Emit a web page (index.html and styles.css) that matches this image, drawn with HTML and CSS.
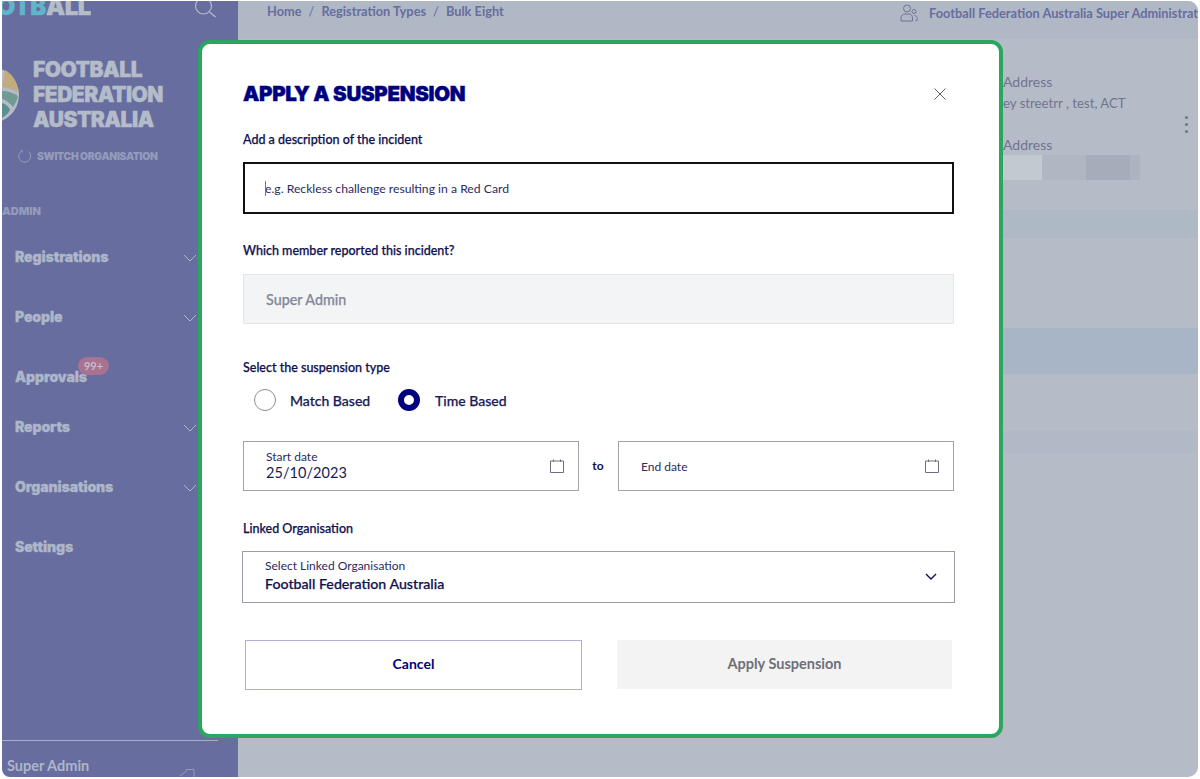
FILE: index.html
```html
<!DOCTYPE html>
<html lang="en">
<head>
<meta charset="utf-8">
<title>Apply a suspension</title>
<link rel="stylesheet" href="styles.css">
</head>
<body>
<div class="frame">
  <aside class="sidebar">
    <div class="brand-row">
      <span class="wordmark"><span><span class="wm-accent">OTB</span>ALL</span></span>
      <svg class="search" viewBox="0 0 24 24" width="24" height="24"><circle cx="10.5" cy="9" r="8" /><path d="M16.5 15l6 5" /></svg>
    </div>
    <div class="org">
      <svg class="org-logo" viewBox="0 0 18 58" width="18" height="58"><circle cx="-11" cy="29" r="28" fill="#b5bcc9"/><path d="M3 4C10 8 15 14 16 26 12 24 7 22 0 21z" fill="#c2ab7c"/><path d="M0 25c6 0 12 2 16 5-1 5-3 8-5 11-3-4-7-7-11-8z" fill="#719a92"/><path d="M0 37c4 1 7 4 8 7-2 4-5 6-8 8z" fill="#5f8f8d"/></svg>
      <div class="org-name">FOOTBALL<br>FEDERATION<br>AUSTRALIA</div>
    </div>
    <div class="switch">
      <svg viewBox="0 0 14 14" width="14" height="14"><path d="M10.5 2.5A6 6 0 1 1 4 1.8" /><path d="M4 1v2.4" /></svg>
      <span>SWITCH ORGANISATION</span>
    </div>
    <div class="section">ADMIN</div>
    <nav class="nav">
      <div class="nav-item"><span>Registrations</span><svg class="chev" viewBox="0 0 14 8" width="14" height="8"><path d="M1 1l6 6 6-6"/></svg></div>
      <div class="nav-item"><span>People</span><svg class="chev" viewBox="0 0 14 8" width="14" height="8"><path d="M1 1l6 6 6-6"/></svg></div>
      <div class="nav-item short"><span class="with-badge">Approvals<b class="badge">99+</b></span></div>
      <div class="nav-item"><span>Reports</span><svg class="chev" viewBox="0 0 14 8" width="14" height="8"><path d="M1 1l6 6 6-6"/></svg></div>
      <div class="nav-item"><span>Organisations</span><svg class="chev" viewBox="0 0 14 8" width="14" height="8"><path d="M1 1l6 6 6-6"/></svg></div>
      <div class="nav-item"><span>Settings</span></div>
    </nav>
    <div class="user">
      <span>Super Admin</span>
      <svg viewBox="0 0 16 12" width="16" height="12"><path d="M7 3V.5h8V12M1 7l5-4"/></svg>
    </div>
  </aside>
  <main class="main">
    <header class="topbar">
      <div class="crumbs"><span>Home</span><i>/</i><span>Registration Types</span><i>/</i><span>Bulk Eight</span></div>
      <div class="account">
        <svg viewBox="0 0 18 18" width="18" height="18"><circle cx="7" cy="4.5" r="3.5"/><circle cx="14" cy="7.5" r="2"/><path d="M1 17v-2.5C1 11.5 3 10 5 10h4c2 0 3.500 1.500 3.500 4v3zM14.500 11.500c1.500 0 2.800 1 2.800 3V16l-2 1"/></svg>
        <span>Football Federation Australia Super Administrator</span>
      </div>
    </header>
    <section class="details">
      <div class="address">
        <h4>Address</h4>
        <p>ey streetrr , test, ACT</p>
        <h4 class="second">Address</h4>
        <div class="redacted"><i class="r1"></i><i class="r2"></i><i class="r3"></i><i class="r4"></i></div>
      </div>
      <div class="dots"><i></i><i></i><i></i></div>
    </section>
    <div class="band b1"></div>
    <div class="band b2"></div>
    <div class="band b3"></div>
  </main>
</div>

<div class="modal">
  <div class="modal-head">
    <h1>APPLY A SUSPENSION</h1>
    <svg class="close" viewBox="0 0 12 12" width="12" height="12"><path d="M.5 .5l11 11M11.500 .5l-11 11"/></svg>
  </div>
  <label class="lbl l-desc">Add a description of the incident</label>
  <div class="field focus"><span class="caret"></span>e.g. Reckless challenge resulting in a Red Card</div>
  <label class="lbl l-member">Which member reported this incident?</label>
  <div class="field disabled">Super Admin</div>
  <label class="lbl l-type">Select the suspension type</label>
  <div class="radios">
    <span class="radio"></span><span class="radio-text first">Match Based</span>
    <span class="radio on"></span><span class="radio-text">Time Based</span>
  </div>
  <div class="dates">
    <div class="date">
      <div class="date-text"><small>Start date</small><strong>25/10/2023</strong></div>
      <svg class="cal" viewBox="0 0 14 14" width="14" height="14"><path d="M.5 2h13v11.500H.5zM3.500 .5v2.500M10.500 .5v2.500"/></svg>
    </div>
    <span class="to">to</span>
    <div class="date">
      <div class="date-text"><small class="end">End date</small></div>
      <svg class="cal" viewBox="0 0 14 14" width="14" height="14"><path d="M.5 2h13v11.500H.5zM3.500 .5v2.500M10.500 .5v2.500"/></svg>
    </div>
  </div>
  <label class="lbl l-link">Linked Organisation</label>
  <div class="select">
    <div class="select-text"><small>Select Linked Organisation</small><strong>Football Federation Australia</strong></div>
    <svg class="down" viewBox="0 0 12 7" width="12" height="7"><path d="M1 1l5 5 5-5"/></svg>
  </div>
  <div class="actions">
    <button class="btn cancel">Cancel</button>
    <button class="btn apply">Apply Suspension</button>
  </div>
</div>
</body>
</html>
```
FILE: styles.css
```css
* { box-sizing: border-box; }
html, body { margin: 0; height: 100%; }
body { background: #fff; font-family: Lato, "Liberation Sans", sans-serif; overflow: hidden; }
svg { fill: none; stroke: currentColor; stroke-width: 1; flex: none; }

.frame { height: 779px; padding: 1px 2px 2px; display: flex; border-radius: 10px; }

.sidebar { width: 236px; background: #676d9f; color: #aeb6c9; display: flex; flex-direction: column; border-radius: 0 0 0 8px; overflow: hidden; }
.brand-row { height: 18px; display: flex; justify-content: space-between; align-items: flex-end; padding-right: 21px; }
.wordmark { display: flex; justify-content: flex-end; width: 89px; white-space: nowrap; font-family: Inter, sans-serif; font-size: 24px; font-weight: 900; line-height: 24px; color: #b5bcc9; overflow: hidden; letter-spacing: -.4px; -webkit-text-stroke: .4px currentColor; }
.wm-accent { color: #60b5cb; }
.search { color: #b5bcc9; width: 24px; height: 24px; margin-bottom: -2px; stroke-width: 1.200; }

.org { display: flex; align-items: center; margin-top: 38px; gap: 13px; }
.org-name { font-family: Inter, sans-serif; font-size: 21px; font-weight: 900; line-height: 25px; color: #b5bcc9; letter-spacing: -.5px; -webkit-text-stroke: .4px #b5bcc9; }
.org-logo { stroke: none; }

.switch { display: flex; align-items: center; gap: 5px; padding-left: 16px; margin-top: 17px; font-family: Inter, sans-serif; font-size: 10.300px; font-weight: 900; color: #949bbb; letter-spacing: -.3px; }
.switch svg { color: #949bbb; }

.section { margin-top: 41px; font-family: Inter, sans-serif; font-size: 11px; font-weight: 900; color: #949bbb; line-height: 14px; white-space: nowrap; }

.nav { margin-top: 19px; display: flex; flex-direction: column; }
.nav-item { height: 60px; display: flex; justify-content: space-between; padding: 11px 41px 0 13px; font-family: Inter, sans-serif; font-size: 14px; font-weight: 900; color: #aeb6c9; line-height: 18px; letter-spacing: -.1px; -webkit-text-stroke: .3px #aeb6c9; }
.nav-item.short { height: 50px; }
.chev { color: #aeb6c9; margin-top: 6px; width: 14px; height: 8px; }
.with-badge { position: relative; }
.badge { position: absolute; left: 63px; top: -11px; width: 31px; height: 18px; border-radius: 9px; background: #a87390; color: #c4bfcc; font-family: Lato, sans-serif; font-size: 11px; font-weight: 700; text-align: center; line-height: 18px; letter-spacing: 0; -webkit-text-stroke: 0; }

.user { margin-top: auto; border-top: 1px solid #a7aec6; margin-right: 20px; height: 37px; display: flex; justify-content: space-between; padding: 17px 0 0 5px; font-size: 14.500px; font-weight: 700; color: #aeb6c9; line-height: 16px; }
.user svg { margin: 11px 23px 0 0; color: #949bbb; }

.main { flex: 1; background: #b5bbc7; min-width: 0; overflow: hidden; border-radius: 0 10px 10px 0; }
.topbar { height: 37px; background: #b0b8c5; display: flex; justify-content: space-between; padding: 3px 0 0 29px; border-bottom: 1px solid #adb5c2; white-space: nowrap; overflow: hidden; }
.crumbs { display: flex; gap: 7px; font-size: 12.800px; font-weight: 700; color: #676d9f; line-height: 14px; }
.crumbs i { font-style: normal; font-weight: 400; }
.account { display: flex; gap: 11px; width: 298px; flex: none; font-size: 12.800px; font-weight: 700; color: #676d9f; line-height: 18px; overflow: hidden; }
.account svg { color: #6f7590; }

.details { height: 172px; position: relative; }
.address { position: absolute; left: 765px; top: 36px; width: 200px; color: #6f7590; font-size: 13px; line-height: 16px; }
.address h4 { margin: 0; font-weight: 400; font-size: 14px; }
.address p { margin: 5px 0 0; font-size: 13.200px; }
.address h4.second { margin-top: 26px; }
.redacted { display: flex; height: 25px; margin-top: 2px; }
.redacted i { display: block; height: 25px; }
.r1 { width: 39px; background: #c3c9d1; }
.r2 { width: 44px; background: #b0b7c3; }
.r3 { width: 44px; background: #a6adba; }
.r4 { width: 10px; background: #adb4c0; }
.dots { position: absolute; right: 10px; top: 78px; display: flex; flex-direction: column; gap: 4px; }
.dots i { display: block; width: 3px; height: 3px; border-radius: 50%; background: #6f7590; }

.band { background: #afb8c5; }
.b1 { height: 28px; }
.b2 { height: 46px; margin-top: 90px; background: #a8b5c7; }
.b3 { height: 22px; margin-top: 57px; background: #b1b9c6; }

.modal { position: absolute; left: 198px; top: 40px; width: 805px; height: 698px; background: #fff; border: 4px solid #2ba55f; border-radius: 12px; padding: 0 47px 0 41px; color: #0c0c5c; }
.modal-head { display: flex; justify-content: space-between; align-items: center; height: 28px; margin-top: 36px; }
.modal-head h1 { margin: 0; font-family: Inter, sans-serif; font-size: 20.500px; font-weight: 900; color: #00007f; letter-spacing: -.3px; line-height: 28px; -webkit-text-stroke: .4px #00007f; }
.close { color: #555b66; margin-right: 6px; }

.lbl { display: block; font-size: 12.500px; font-weight: 500; line-height: 16px; color: #10104f; -webkit-text-stroke: .25px #10104f; }
.l-desc { margin-top: 24px; }
.l-member { margin-top: 29px; }
.l-type { margin-top: 36px; }
.l-link { margin-top: 30px; }

.field { width: 711px; height: 52px; margin-top: 14px; display: flex; align-items: center; padding-left: 22px; font-size: 12.200px; color: #2b2b5e; position: relative; }
.focus { border: 2px solid #111; padding-left: 20px; }
.caret { position: absolute; left: 20px; top: 17px; width: 1px; height: 15px; background: #777; }
.disabled { height: 50px; margin-top: 15px; background: #f3f4f6; border: 1px solid #e4e6ea; color: #83889a; font-size: 14.300px; font-weight: 500; -webkit-text-stroke: .25px #83889a; padding-left: 22px; }

.radios { display: flex; align-items: center; margin-top: 13px; padding-left: 11px; height: 22px; white-space: nowrap; }
.radio { width: 22px; height: 22px; border-radius: 50%; border: 1px solid #8e8e98; flex: none; }
.radio.on { border: 6px solid #00007f; margin-left: 28px; }
.radio-text { font-size: 14px; font-weight: 500; -webkit-text-stroke: .25px #1a1a55; color: #1a1a55; margin-left: 15px; }
.radio-text.first { margin-left: 14px; width: 80px; flex: none; }

.dates { display: flex; align-items: center; margin-top: 30px; width: 711px; }
.date { width: 336px; height: 50px; border: 1px solid #a3a3ad; display: flex; align-items: center; justify-content: space-between; padding: 0 14px 0 22px; flex: none; }
.date-text { display: flex; flex-direction: column; }
.date small { font-size: 12px; line-height: 14px; color: #2b2b5e; }
.date small.end { margin-top: 2px; }
.date strong { font-size: 14.500px; font-weight: 400; line-height: 18px; color: #1a1a55; letter-spacing: .05px; }
.cal { color: #6b6f7d; margin-top: -1px; }
.to { width: 39px; text-align: center; padding-right: 1px; font-size: 12px; font-weight: 700; color: #10104f; margin-top: -2px; }

.select { width: 713px; margin-left: -1px; height: 52px; margin-top: 14px; border: 1px solid #9b9ba6; display: flex; justify-content: space-between; align-items: center; padding: 0 17px 0 22px; }
.select-text { display: flex; flex-direction: column; margin-top: -2px; }
.select small { font-size: 12px; line-height: 14px; color: #2b2b5e; }
.select strong { font-size: 14.200px; font-weight: 500; -webkit-text-stroke: .25px #10104f; line-height: 18px; color: #10104f; margin-top: 2px; }
.down { color: #10104f; stroke-width: 1.400; margin-top: -2px; }

.actions { display: flex; justify-content: space-between; margin: 37px 2px 0; width: 707px; }
.btn { height: 50px; padding: 0 0 2px; font-family: inherit; font-size: 14.500px; font-weight: 700; }
.cancel { width: 337px; padding-bottom: 4px; background: #fff; border: 1px solid #aeaed6; color: #00007f; font-size: 14px; }
.apply { width: 335px; background: #f3f3f3; border: 0; color: #6f6f78; height: 49px; }
```
